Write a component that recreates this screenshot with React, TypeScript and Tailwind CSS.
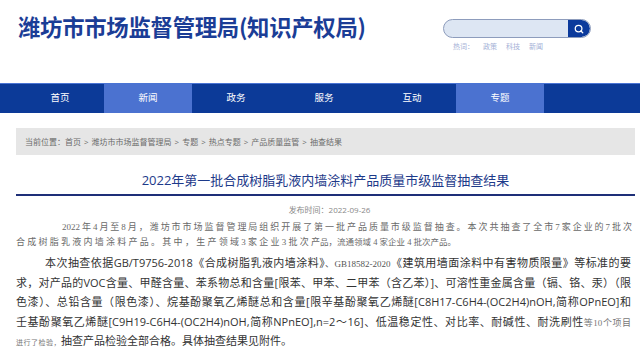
import React from "react";
import { Search } from "lucide-react";

const sans = "font-['Open_Sans','Noto_Sans_CJK_SC',sans-serif]";
const serif = "font-['Liberation_Serif','Noto_Sans_CJK_SC',serif]";
const J = "text-justify [text-align-last:justify]";

export default function App() {
  const navs = ["首页", "新闻", "政务", "服务", "互动", "专题"];
  const active = [1, 5];
  return (
    <div className={`w-[640px] h-[348px] overflow-hidden bg-white ${sans}`}>
      {/* header */}
      <div className="h-[83px] flex justify-between pl-[18px] pr-[49px]">
        <h1 className="pt-[12px] text-[22.4px] leading-[28px] font-bold text-[#1b3d96] tracking-[-0.3px] font-['Noto_Sans_CJK_SC',sans-serif]">
          潍坊市市场监督管理局(知识产权局)
        </h1>
        <div className="pt-[19px] w-[148px] flex flex-col">
          <div className="h-[19px] flex rounded-full border border-[#8d9cbc] bg-[#dde6f3] overflow-hidden">
            <div className="flex-1" />
            <div className="w-[22px] bg-[#0b3a9c] flex items-center justify-center rounded-r-full">
              <Search size={10} strokeWidth={3} color="#ffffff" />
            </div>
          </div>
          <div className="mt-[4px] pl-[10px] flex gap-[9px] text-[7px] leading-[10px] text-[#a3b0d6]">
            <span>热词：</span>
            <span>政策</span>
            <span>科技</span>
            <span>新闻</span>
          </div>
        </div>
      </div>

      {/* nav */}
      <div className="h-[30px] bg-[#0c3a98] border-t border-[#4a74d4] flex pl-[16px]">
        {navs.map((n, i) => (
          <div
            key={n}
            className={`w-[88px] flex items-center justify-center text-[9.5px] text-white ${
              active.includes(i) ? "bg-[#4b72d0]" : ""
            }`}
          >
            {n}
          </div>
        ))}
      </div>

      {/* main */}
      <div className="pl-[16px] pr-[5px]">
        <div className="mt-[15px] h-[27px] bg-[#e6e6e6] flex items-center pl-[9px] text-[8px] text-[#6b6b6b] gap-[3px]">
          <span>当前位置：首页</span>
          <span>&gt;</span>
          <span>潍坊市市场监督管理局</span>
          <span>&gt;</span>
          <span>专题</span>
          <span>&gt;</span>
          <span>热点专题</span>
          <span>&gt;</span>
          <span>产品质量监管</span>
          <span>&gt;</span>
          <span>抽查结果</span>
        </div>

        <div className="pt-[16px] pb-[5px] border-b-2 border-[#1e2f78] text-center text-[13px] leading-[18px] text-[#1d3a8a]">
          2022年第一批合成树脂乳液内墙涂料产品质量市级监督抽查结果
        </div>

        <div className="mt-[8px] pl-[8px] text-center text-[8px] leading-[12px] text-[#888]">
          发布时间：2022-09-26
        </div>

        {/* paragraph 1 */}
        <div className={`mt-[4px] ${serif} text-[9px] leading-[15px] text-[#6a6a6a]`}>
          <div className={`pl-[46px] mr-[3px] ${J}`}>
            2022年4月至8月，潍坊市市场监督管理局组织开展了第一批产品质量市级监督抽查。本次共抽查了全市7家企业的7批次
          </div>
          <div className="flex">
            <span className={`w-[304px] ${J}`}>
              合成树脂乳液内墙涂料产品。其中，生产领域3家企业3批次产
            </span>
            <span className="text-[8.5px]">品，流通领域 4 家企业 4 批次产品。</span>
          </div>
        </div>

        {/* paragraph 2 */}
        <div className="mt-[3px] mr-[4px] text-[11px] text-[#333]">
          <div className={`h-[19.5px] leading-[19.5px] pl-[29px] ${J}`}>
            本次抽查依据GB/T9756-2018《合成树脂乳液内墙涂料》
            <span className={`${serif} leading-none text-[9px] text-[#555]`}>、GB18582-2020</span>
            《建筑用墙面涂料中有害物质限量》等标准的要
          </div>
          <div className={`h-[19.5px] leading-[19.5px] ${J}`}>
            求，对产品的VOC含量、甲醛含量、苯系物总和含量[限苯、甲苯、二甲苯（含乙苯）]、可溶性重金属含量（镉、铬、汞）（限
          </div>
          <div className={`h-[19.5px] leading-[19.5px] ${J}`}>
            色漆）、总铅含量（限色漆）、烷基酚聚氧乙烯醚总和含量[限辛基酚聚氧乙烯醚[C8H17-C6H4-(OC2H4)nOH,简称OPnEO]和
          </div>
          <div className={`h-[19.5px] leading-[19.5px] ${J}`}>
            壬基酚聚氧乙烯醚[C9H19-C6H4-(OC2H4)nOH,简称NPnEO],n=2～16]、低温稳定性、对比率、耐碱性、耐洗刷性
            <span className={`${serif} leading-none text-[9px] text-[#777]`}>等10个项目</span>
          </div>
          <div className="h-[19px] leading-[19px]">
            <span className={`${serif} leading-none text-[7px] tracking-[0.5px] text-[#777]`}>进行了检验，</span>
            抽查产品检验全部合格。具体抽查结果见附件。
          </div>
        </div>
      </div>
    </div>
  );
}
